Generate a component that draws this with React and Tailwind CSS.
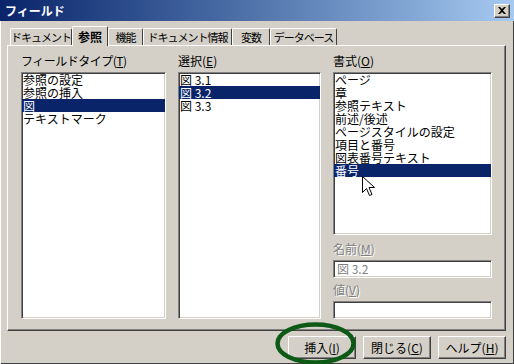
import React from 'react';

const sunken = 'border border-t-[#808080] border-l-[#808080] border-b-white border-r-white shadow-[inset_1px_1px_0_#404040,inset_-1px_-1px_0_#d4d0c8]';
const raised = 'border border-t-white border-l-white border-b-[#404040] border-r-[#404040] shadow-[inset_-1px_-1px_0_#808080]';

const Key = ({ children }) => <span className="underline underline-offset-1">{children}</span>;

const ListBox = ({ items, selected, className }) => (
    <div className={`bg-white ${sunken} ${className}`}>
        {items.map((item, i) => (
            <div
                key={item}
                className={`h-[13px] leading-[13px] whitespace-nowrap pl-px ${i === selected ? 'bg-[#0a246a] text-white' : 'text-black'}`}
            >
                {item}
            </div>
        ))}
    </div>
);

const tabs = [
    { label: 'ドキュメント', w: 'w-[62px]' },
    { label: '参照', w: 'w-[36px]', active: true },
    { label: '機能', w: 'w-[35px]' },
    { label: 'ドキュメント情報', w: 'w-[89px]' },
    { label: '変数', w: 'w-[38px]' },
    { label: 'データベース', w: 'w-[67px]' },
];

const Button = ({ children }) => (
    <button className={`w-[68px] h-[23px] bg-[#d4d0c8] text-black text-[12px] leading-[21px] ${raised}`}>
        {children}
    </button>
);

export default function App() {
    return (
        <div
            className="w-[514px] h-[364px] bg-[#d4d0c8] relative overflow-hidden shadow-[inset_1px_1px_0_#ffffff,inset_-1px_-1px_0_#404040] text-[12px]"
            style={{ fontFamily: '"Noto Sans CJK JP", "Liberation Sans", sans-serif' }}
        >
            {/* title bar */}
            <div className="h-[21px] bg-gradient-to-r from-[#0a246a] to-[#a6caf0] flex items-center justify-between pl-[5px] pr-[4px]">
                <span className="text-white font-bold text-[12px] leading-[20px]">フィールド</span>
                <div className={`w-[16px] h-[14px] bg-[#d4d0c8] flex items-center justify-center ${raised}`}>
                    <svg width="8" height="7" viewBox="0 0 8 7">
                        <path d="M0 0h2l2 2 2-2h2L5 3.5 8 7H6L4 5 2 7H0l3-3.5z" fill="#000" />
                    </svg>
                </div>
            </div>

            <div className="pl-[7px] pr-[8px]">
                {/* tabs */}
                <div className="flex items-end pl-[3px] h-[24px] text-[11px] tracking-[-1px]">
                    {tabs.map((t) =>
                        t.active ? (
                            <div
                                key={t.label}
                                className={`${t.w} h-[20px] relative z-10 -mb-px bg-[#d4d0c8] border-t border-l border-r border-t-white border-l-white border-r-[#404040] rounded-t-[2px] flex items-center justify-center font-bold text-[12px] tracking-normal`}
                            >
                                {t.label}
                            </div>
                        ) : (
                            <div
                                key={t.label}
                                className={`${t.w} h-[17px] bg-[#d4d0c8] border-t border-l border-r border-t-white border-l-white border-r-[#404040] rounded-t-[2px] flex items-center justify-center whitespace-nowrap`}
                            >
                                {t.label}
                            </div>
                        )
                    )}
                </div>

                {/* panel */}
                <div className={`h-[286px] ${raised} pl-[13px] pt-[8px] flex gap-[12px]`}>
                    <div className="w-[145px] flex flex-col">
                        <div className="h-[18px] leading-[14px] tracking-[-0.5px]">
                            フィールドタイプ(<Key>T</Key>)
                        </div>
                        <ListBox
                            className="h-[247px]"
                            items={['参照の設定', '参照の挿入', '図', 'テキストマーク']}
                            selected={2}
                        />
                    </div>

                    <div className="w-[143px] flex flex-col">
                        <div className="h-[18px] leading-[14px]">
                            選択(<Key>E</Key>)
                        </div>
                        <ListBox className="h-[247px]" items={['図 3.1', '図 3.2', '図 3.3']} selected={1} />
                    </div>

                    <div className="w-[159px] flex flex-col">
                        <div className="h-[18px] leading-[14px]">
                            書式(<Key>O</Key>)
                        </div>
                        <ListBox
                            className="h-[163px]"
                            items={[
                                'ページ',
                                '章',
                                '参照テキスト',
                                '前述/後述',
                                'ページスタイルの設定',
                                '項目と番号',
                                '図表番号テキスト',
                                '番号',
                            ]}
                            selected={7}
                        />
                        <div className="mt-[6px] h-[16px] leading-[16px] text-[#808080] [text-shadow:1px_1px_0_#fff]">
                            名前(<Key>M</Key>)
                        </div>
                        <div className={`mt-[3px] h-[18px] bg-white ${sunken} pl-[3px] leading-[15px] text-[#808080]`}>
                            図 3.2
                        </div>
                        <div className="mt-[4px] h-[16px] leading-[16px] text-[#808080] [text-shadow:1px_1px_0_#fff]">
                            値(<Key>V</Key>)
                        </div>
                        <div className={`mt-[3px] h-[18px] bg-white ${sunken}`} />
                    </div>
                </div>

                {/* buttons */}
                <div className="flex justify-end gap-[7px] mt-[5px]">
                    <Button>
                        挿入(<Key>I</Key>)
                    </Button>
                    <Button>
                        閉じる(<Key>C</Key>)
                    </Button>
                    <Button>
                        ヘルプ(<Key>H</Key>)
                    </Button>
                </div>
            </div>

            {/* mouse cursor */}
            <svg className="absolute left-[362px] top-[176px]" width="13" height="21" viewBox="0 0 13 21">
                <path d="M0.5 0.5v16l4-4 3 7 2.5-1-3-7h5.5z" fill="#fff" stroke="#000" strokeWidth="1" />
            </svg>

            {/* green annotation ellipse */}
            <svg className="absolute left-[274px] top-[321px]" width="84" height="46" viewBox="0 0 84 46">
                <ellipse cx="41.5" cy="22.5" rx="38" ry="19" fill="none" stroke="#0d5a16" strokeWidth="4.5" />
            </svg>
        </div>
    );
}
